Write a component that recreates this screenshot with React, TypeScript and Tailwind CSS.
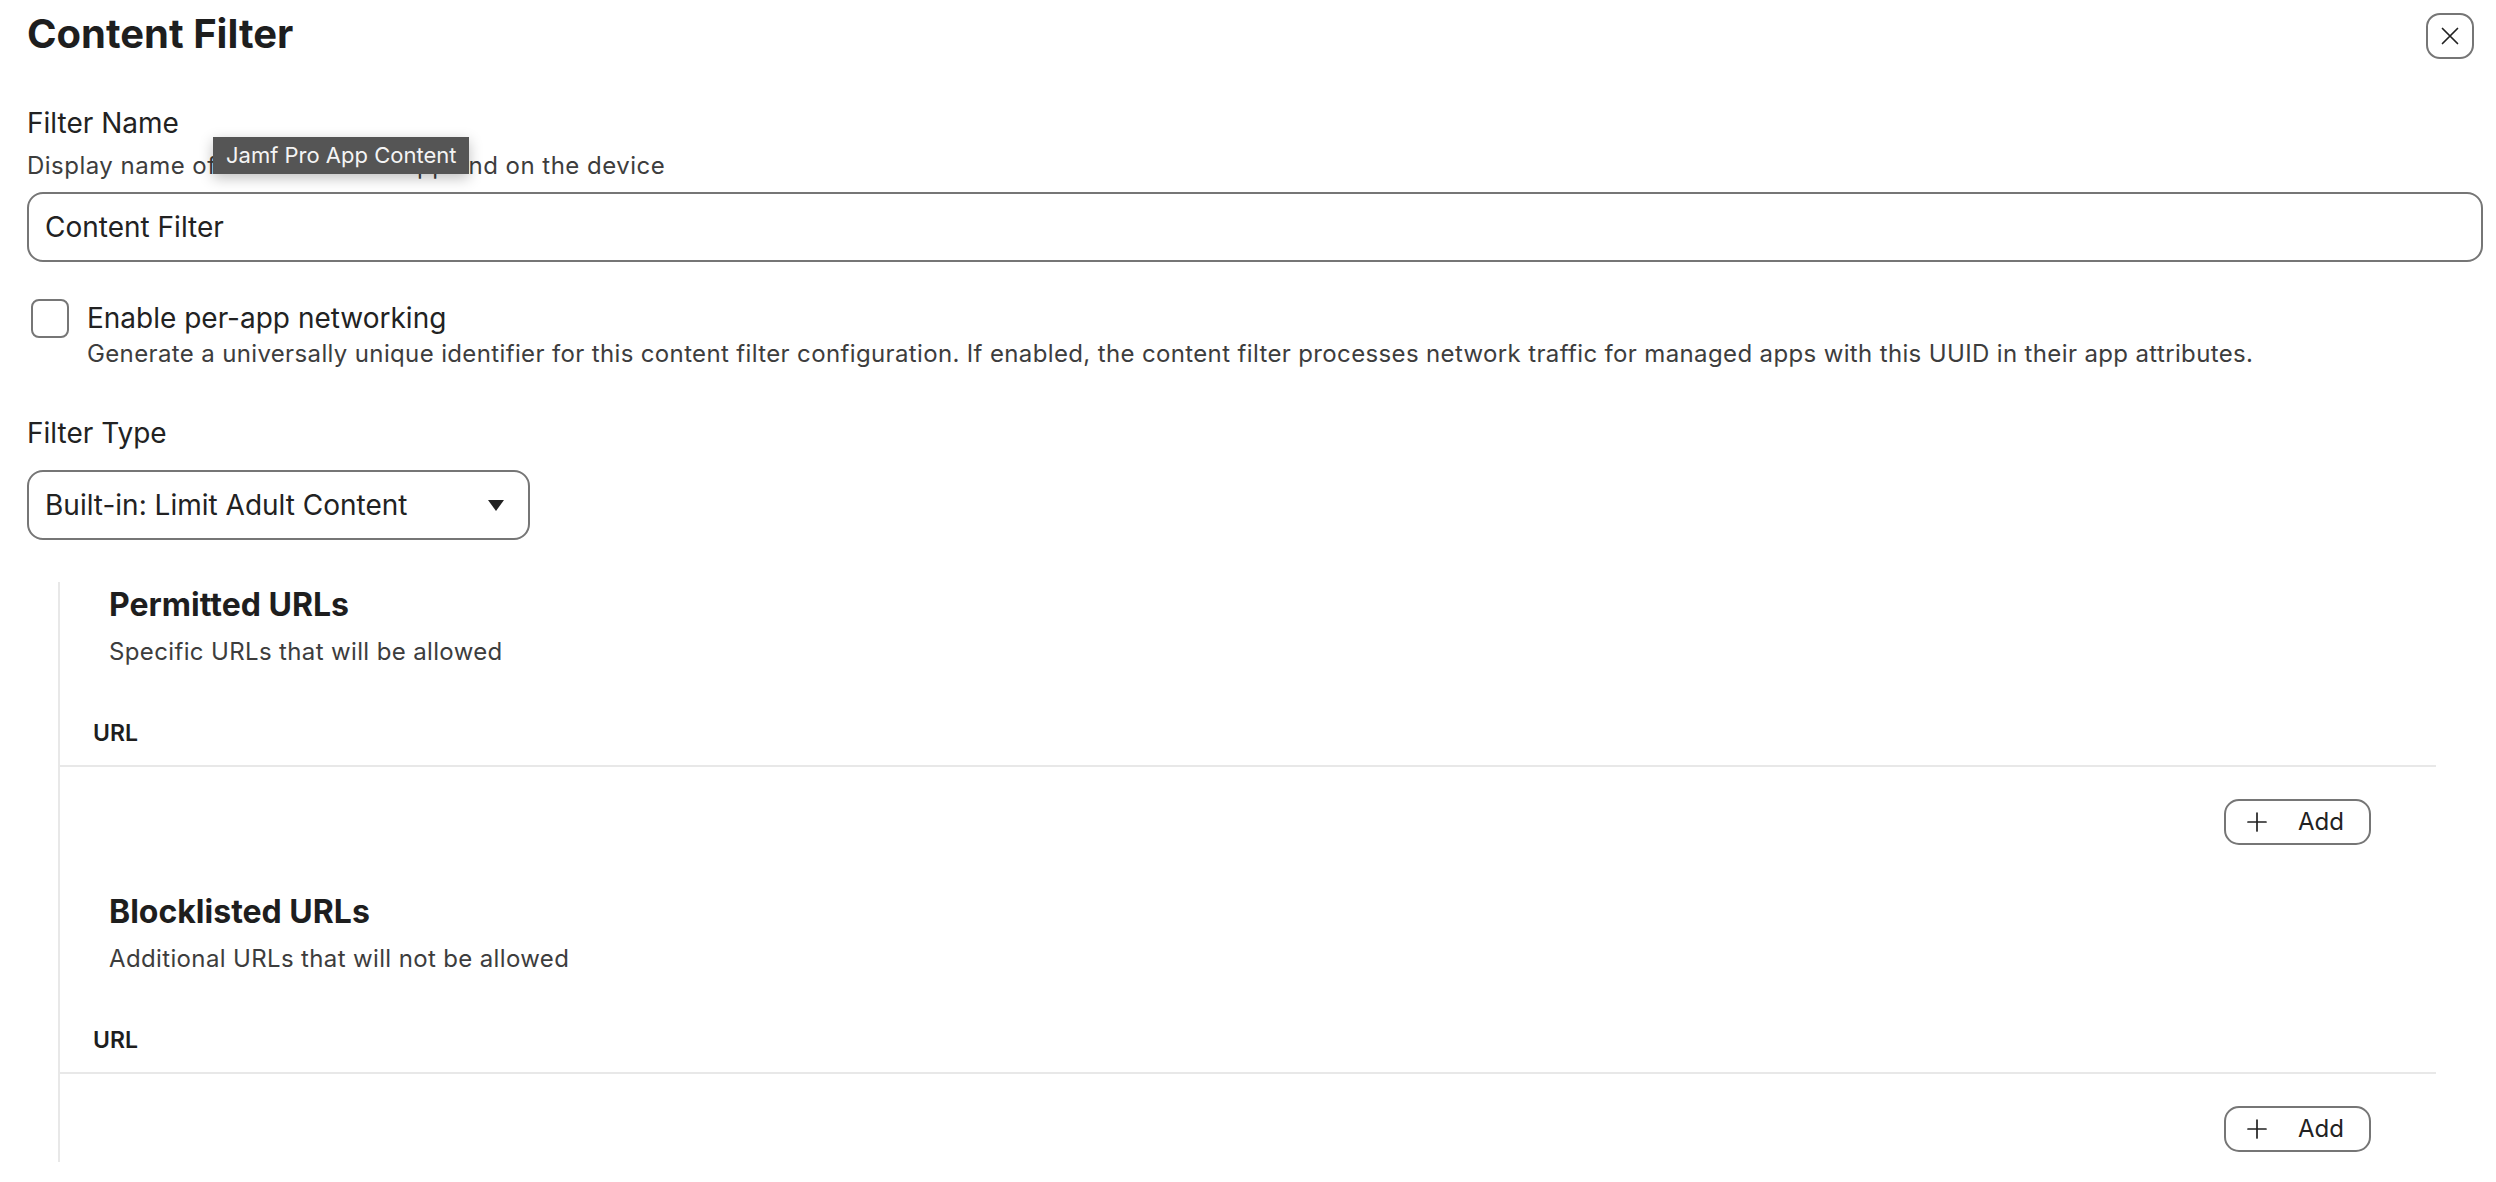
import React from "react";

function CloseIcon() {
  return (
    <svg width="18" height="18" viewBox="0 0 18 18" fill="none">
      <path d="M1.5 1.5L16.5 16.5M16.5 1.5L1.5 16.5" stroke="#222" strokeWidth="1.7" strokeLinecap="round" />
    </svg>
  );
}

function PlusIcon() {
  return (
    <svg width="20" height="20" viewBox="0 0 20 20" fill="none">
      <path d="M10 1V19M1 10H19" stroke="#222" strokeWidth="1.7" strokeLinecap="round" />
    </svg>
  );
}

function UrlSection({ title, desc, first }: { title: string; desc: string; first?: boolean }) {
  return (
    <div className={first ? "" : "mt-[47px]"}>
      <h2 className="pl-[49px] text-[32px] font-bold leading-[40px] text-[#1e1e1e]">{title}</h2>
      <p className="mt-[12px] pl-[49px] text-[24px] leading-[30px] tracking-[0.015em] text-[#3d3d3d]">{desc}</p>
      <div className="mt-[34px] flex h-[64px] items-center pl-[33px] text-[23px] font-semibold text-[#1e1e1e]">URL</div>
      <div className="h-[2px] bg-[#e8e8e8]" />
      <div className="mt-[32px] flex justify-end pr-[65px]">
        <button className="flex h-[46px] w-[147px] items-center rounded-[15px] border-2 border-[#767676] bg-white pl-[21px] text-[24px] text-[#222]">
          <PlusIcon />
          <span className="ml-[31px] leading-none">Add</span>
        </button>
      </div>
    </div>
  );
}

export default function App() {
  return (
    <div className="relative min-h-[1182px] w-full bg-white pl-[27px] pr-[13px] font-['Inter','Noto_Sans',sans-serif] text-[#222]">
      <div className="flex items-start justify-between pr-[9px] pt-[10px]">
        <h1 className="text-[40px] font-bold leading-[48px] text-[#1e1e1e]">Content Filter</h1>
        <button className="mt-[3px] flex h-[46px] w-[48px] items-center justify-center rounded-[14px] border-2 border-[#767676] bg-white">
          <CloseIcon />
        </button>
      </div>

      <div className="mt-[47px]">
        <div className="text-[28px] leading-[34px]">Filter Name</div>
        <p className="mt-[11px] text-[24px] leading-[30px] tracking-[0.02em] text-[#3d3d3d]">
          Display name of the filter in the app and on the device
        </p>
        <div className="mt-[11px] flex h-[70px] items-center rounded-[16px] border-2 border-[#767676] px-[16px] text-[28px]">
          Content Filter
        </div>
      </div>

      <div className="mt-[37px] flex items-start">
        <div className="ml-[4px] h-[39px] w-[38px] shrink-0 rounded-[8px] border-2 border-[#767676] bg-white" />
        <div className="ml-[18px] mt-[2px]">
          <div className="text-[28px] leading-[34px]">Enable per-app networking</div>
          <p className="mt-[4px] text-[24px] leading-[30px] tracking-[0.015em] text-[#3d3d3d]">
            Generate a universally unique identifier for this content filter configuration. If enabled, the content filter processes network traffic for managed apps with this UUID in their app attributes.
          </p>
        </div>
      </div>

      <div className="mt-[47px] text-[28px] leading-[34px]">Filter Type</div>
      <div className="mt-[20px] flex h-[70px] w-[503px] items-center justify-between rounded-[16px] border-2 border-[#767676] pl-[16px] pr-[24px] text-[28px]">
        <span>Built-in: Limit Adult Content</span>
        <svg width="16" height="11" viewBox="0 0 16 11">
          <path d="M0 0H16L8 11Z" fill="#222" />
        </svg>
      </div>

      <div className="ml-[31px] mr-[47px] mt-[42px] border-l-2 border-[#e8e8e8] pb-[10px] pt-[3px]">
        <UrlSection first title="Permitted URLs" desc="Specific URLs that will be allowed" />
        <UrlSection title="Blocklisted URLs" desc="Additional URLs that will not be allowed" />
      </div>

      <div className="absolute left-[213px] top-[137px] h-[37px] bg-[#555555] px-[13px] text-[22px] leading-[37px] text-[#f4f4f4] shadow-[0_4px_14px_rgba(0,0,0,0.25)]">
        Jamf Pro App Content
      </div>
    </div>
  );
}
